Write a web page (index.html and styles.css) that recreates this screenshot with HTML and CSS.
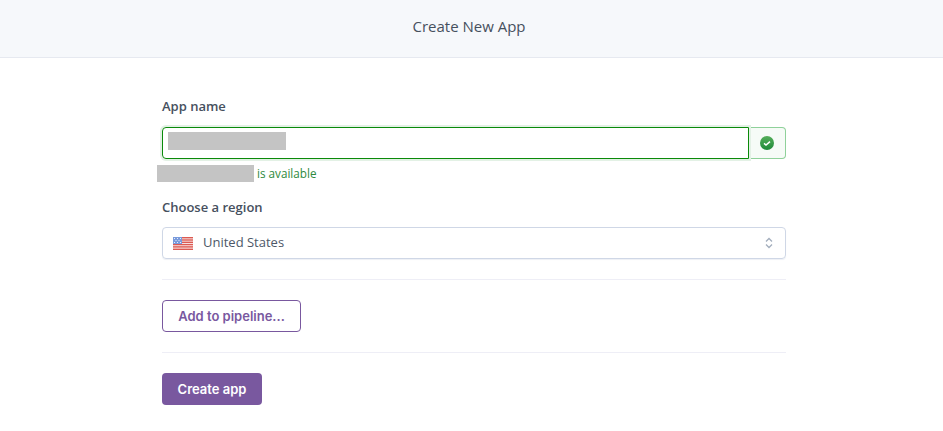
FILE: index.html
```html
<!DOCTYPE html>
<html lang="en">
<head>
<meta charset="utf-8">
<title>Create New App</title>
<link rel="stylesheet" href="styles.css">
</head>
<body>
<header class="page-header">Create New App</header>
<main class="form">
  <label class="label">App name</label>
  <div class="name-row">
    <div class="name-input"><span class="redact redact-input"></span></div>
    <div class="name-status">
      <svg class="check" width="14" height="14" viewBox="0 0 14 14"><defs><linearGradient id="g" x1="0" y1="0" x2="0" y2="1"><stop offset="0" stop-color="#55ae5a"/><stop offset="1" stop-color="#1f8a3a"/></linearGradient></defs><circle cx="7" cy="7" r="7" fill="url(#g)"/><path d="M4 7.4 6 9 10 5.6" fill="none" stroke="#fff" stroke-width="1.5"/></svg>
    </div>
  </div>
  <div class="availability"><span class="redact redact-msg"></span><span class="avail-text">is available</span></div>
  <label class="label label-region">Choose a region</label>
  <div class="select">
    <svg class="flag" width="20" height="13" viewBox="0 0 20 13"><rect width="20" height="13" fill="#fbeeee"/><g fill="#dc5a52"><rect width="20" height="1.4"/><rect y="2.3" width="20" height="1.4"/><rect y="4.6" width="20" height="1.4"/><rect y="6.9" width="20" height="1.4"/><rect y="9.2" width="20" height="1.4"/><rect y="11.6" width="20" height="1.4"/></g><rect width="9" height="7" fill="#7a9bdc"/><g fill="#e6edfa"><rect x="1" y="1" width="1" height="1"/><rect x="4" y="1" width="1" height="1"/><rect x="7" y="1" width="1" height="1"/><rect x="2.5" y="3" width="1" height="1"/><rect x="5.5" y="3" width="1" height="1"/><rect x="1" y="5" width="1" height="1"/><rect x="4" y="5" width="1" height="1"/><rect x="7" y="5" width="1" height="1"/></g></svg>
    <span class="select-text">United States</span>
    <svg class="chevrons" width="8" height="12" viewBox="0 0 8 12"><path d="M1 4.5 4 1.5 7 4.5M1 7.5 4 10.5 7 7.5" fill="none" stroke="#a3aebd" stroke-width="1.3"/></svg>
  </div>
  <hr class="rule rule-first">
  <button class="btn btn-outline">Add to pipeline...</button>
  <hr class="rule rule-second">
  <button class="btn btn-primary">Create app</button>
</main>
</body>
</html>
```
FILE: styles.css
```css
* { box-sizing: border-box; }
html, body { margin: 0; padding: 0; background: #fff; }
body { font-family: "Open Sans", "Noto Sans", sans-serif; color: #3f4a5a; height: 431px; overflow: hidden; }
.page-header { height: 58px; padding: 0 5px 5px 0; background: #f6f8fb; border-bottom: 1px solid #e6e9f0; display: flex; align-items: center; justify-content: center; font-size: 15px; color: #46505e; }
.form { width: 624px; margin: 0 0 0 162px; padding-top: 39px; display: flex; flex-direction: column; align-items: flex-start; }
.label { font-size: 13px; font-weight: 600; line-height: 18px; color: #46505e; }
.name-row { display: flex; width: 100%; height: 32px; margin-top: 12px; }
.name-input { flex: 1; border: 1px solid #0a8a0a; border-radius: 4px 0 0 4px; box-shadow: 0 0 0 2px #e3f1e5; padding: 4px 5px; position: relative; z-index: 1; }
.redact { display: block; background: #c4c4c4; }
.redact-input { width: 118px; height: 18px; }
.name-status { width: 37px; border: 1px solid #8fd19a; border-left: 0; border-radius: 0 4px 4px 0; background: #f6fbf7; display: flex; align-items: center; justify-content: center; }
.availability { display: flex; align-items: center; height: 18px; margin: 5px 0 0 -5px; }
.redact-msg { width: 97px; height: 17px; }
.avail-text { font-size: 11.7px; color: #2f8a3d; margin-left: 3px; }
.label-region { margin-top: 16px; }
.select { width: 100%; height: 32px; margin-top: 11px; border: 1px solid #cfd7e6; border-radius: 4px; display: flex; align-items: center; padding: 0 12px 0 10px; box-shadow: 0 1px 1px #eef0f5; }
.select-text { flex: 1; font-size: 13px; line-height: 18px; padding-bottom: 2px; color: #4d5868; margin-left: 10px; }
.rule { width: 100%; height: 1px; border: 0; margin: 0; background: #eeeef6; }
.rule-first { margin-top: 20px; }
.rule-second { margin-top: 20px; }
.btn { height: 32px; border-radius: 4px; font-family: "Inter", "Open Sans", sans-serif; font-size: 13px; font-weight: 600; padding: 0; white-space: nowrap; }
.btn-outline { margin-top: 20px; width: 139px; background: #fff; border: 1px solid #79589f; color: #79589f; }
.btn-primary { margin-top: 20px; width: 100px; background: #79589f; border: 0; color: #fff; }
```
